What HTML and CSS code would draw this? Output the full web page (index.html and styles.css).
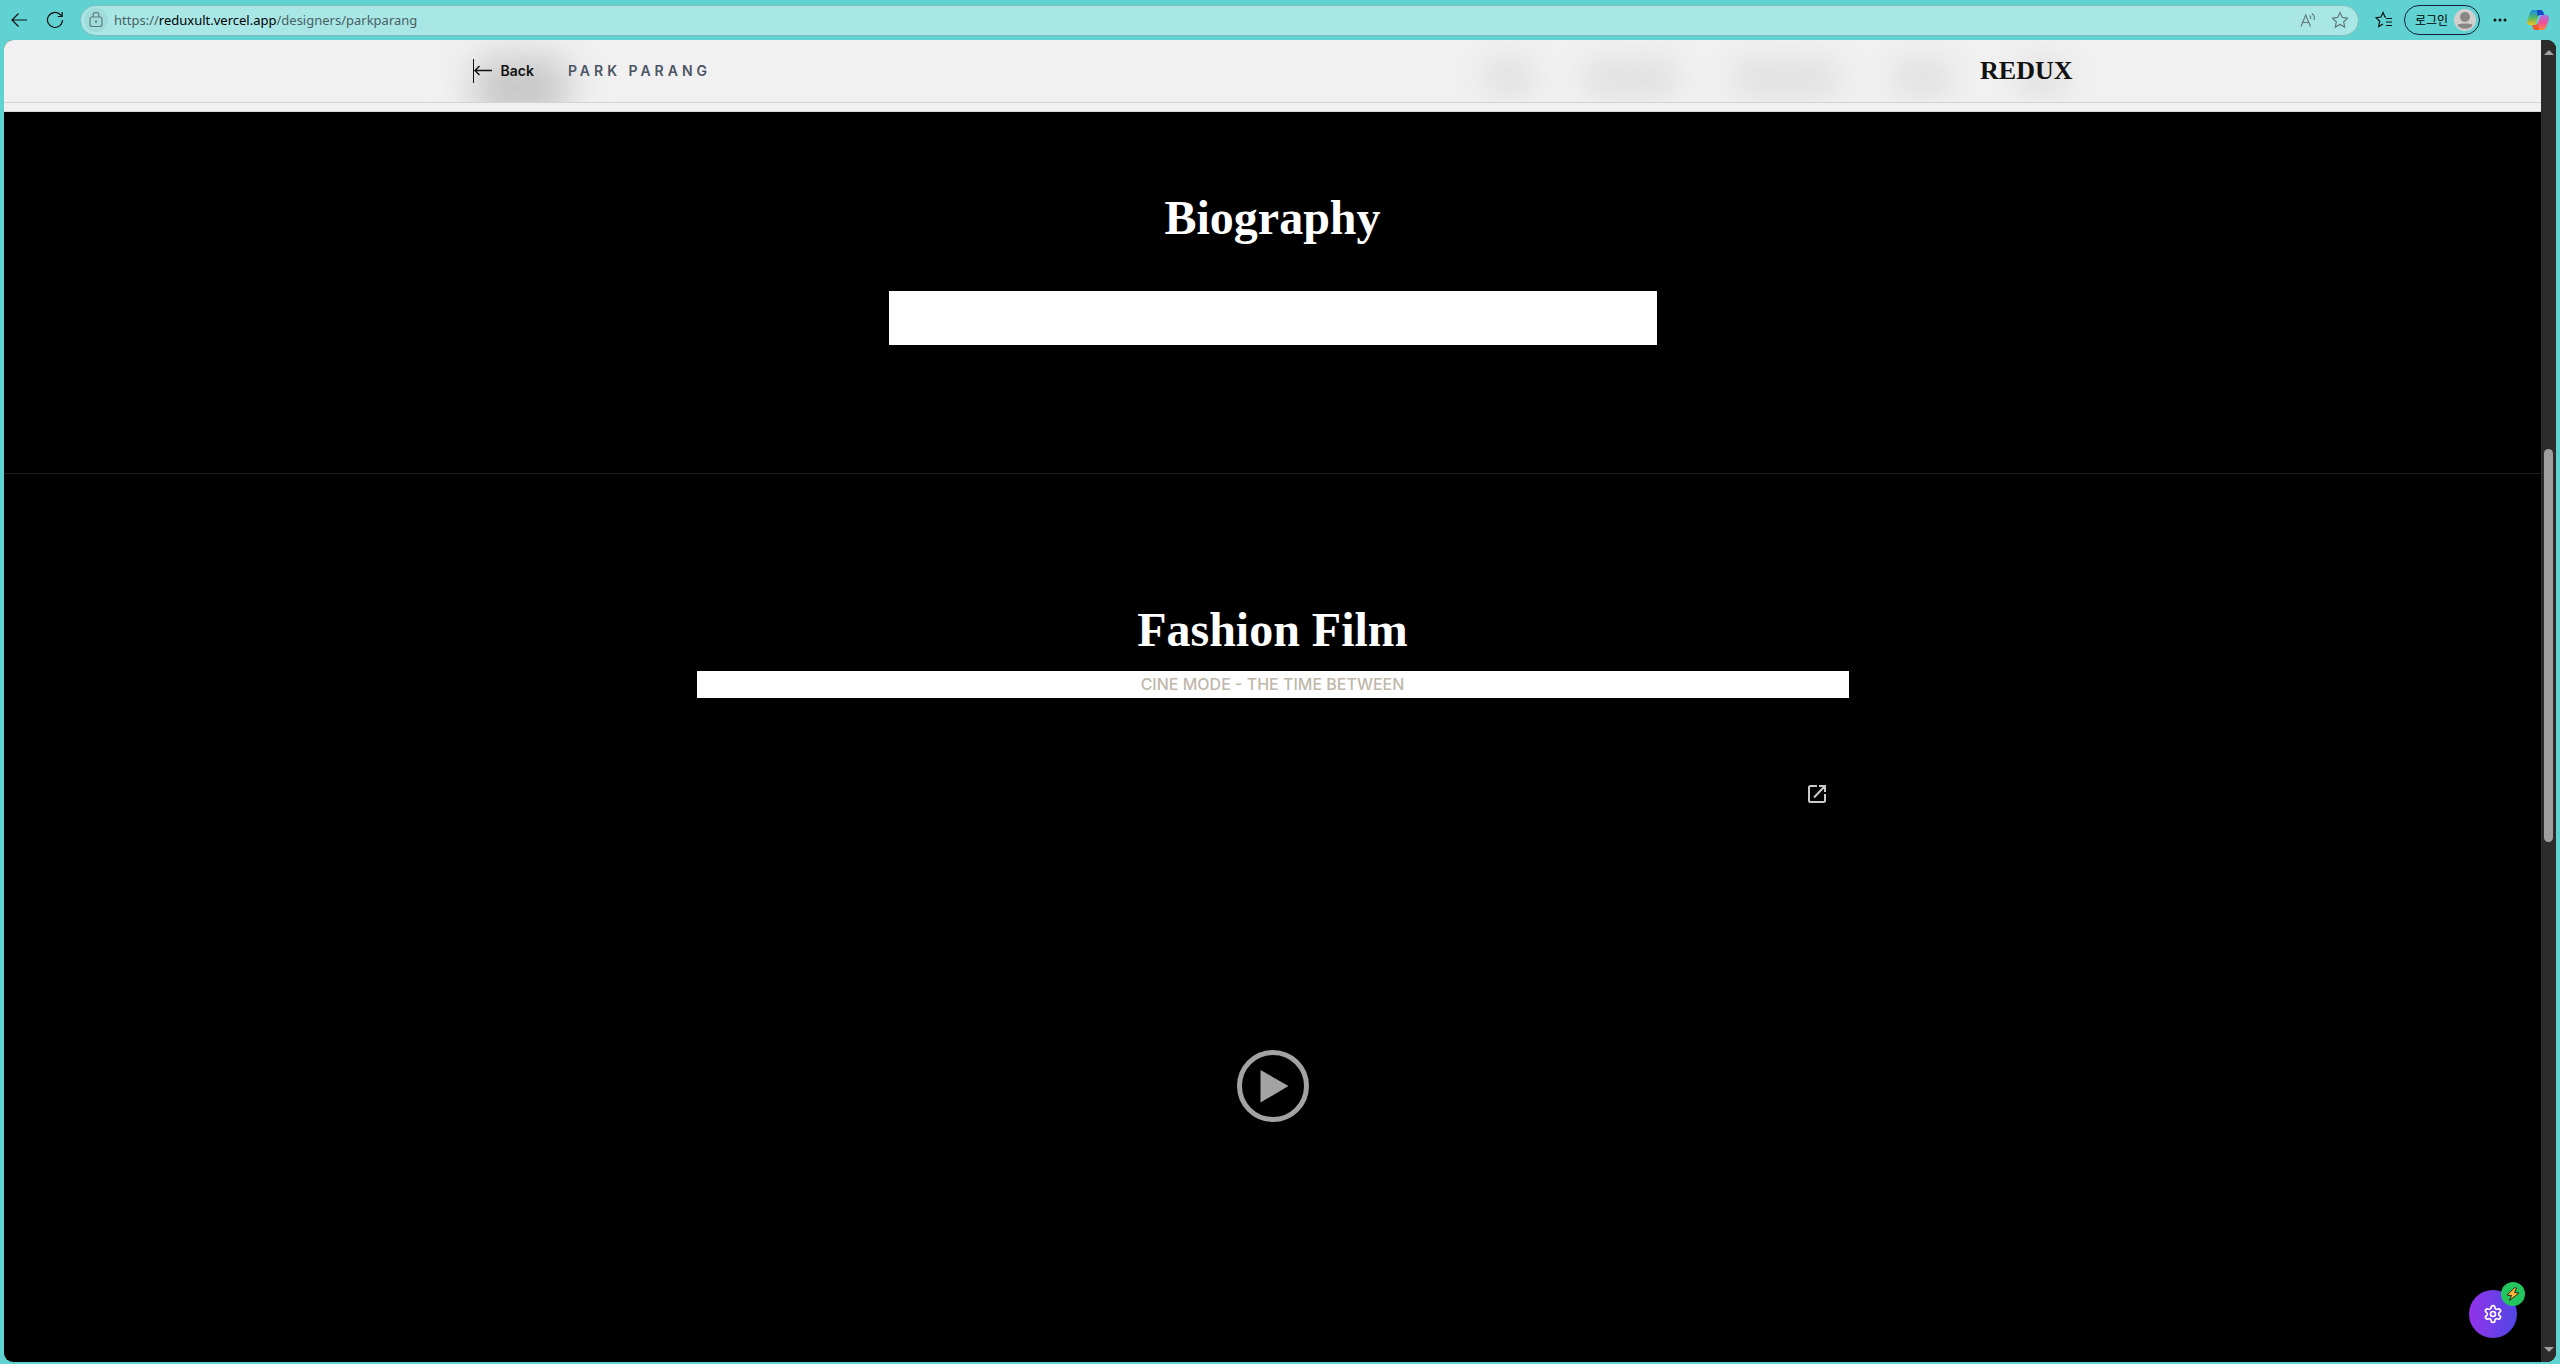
FILE: index.html
```html
<!DOCTYPE html>
<html lang="ko">
<head>
<meta charset="utf-8">
<title>Park Parang - REDUX</title>
<link rel="stylesheet" href="styles.css">
</head>
<body>
<div class="browser">
  <div class="toolbar">
    <button class="tool" aria-label="Back"><svg width="18" height="18" viewBox="0 0 18 18"><path d="M17 9H2M8.500 2.500 2 9l6.500 6.500"/></svg></button>
    <button class="tool reload" aria-label="Reload"><svg width="18" height="18" viewBox="0 0 18 18"><path d="M16.500 9a7.500 7.500 0 1 1-2.600-5.700L16 5.200M16.200 1v4.500h-4.500"/></svg></button>
    <div class="address">
      <button class="lock" aria-label="Site information"><svg width="14" height="16" viewBox="0 0 14 16"><rect x="1" y="5" width="12" height="9.500" rx="2"/><path d="M4 5V3.500a3 3 0 0 1 6 0V5"/><circle cx="7" cy="9.700" r=".6"/></svg></button>
      <div class="url" role="textbox" aria-label="Address">https://<b>reduxult.vercel.app</b>/designers/parkparang</div>
      <button class="mini" aria-label="Read aloud"><svg width="16" height="16" viewBox="0 0 16 16"><path d="M1 14.500 5.700 3l4.800 11.500M2.800 10.500h6M9.500 3.500c1 .8 1.400 2 1.200 3.500M11.800 1.500c2.200 1.300 3 4 2.200 6.500"/></svg></button>
      <button class="mini" aria-label="Add to favorites"><svg width="18" height="18" viewBox="0 0 18 18"><path d="m9 1.500 2.300 4.900 5.300.7-3.900 3.700 1 5.300L9 13.500l-4.700 2.600 1-5.300L1.400 7.100l5.300-.7z"/></svg></button>
    </div>
    <button class="tool" aria-label="Favorites"><svg width="18" height="18" viewBox="0 0 18 18"><path d="M11 6.200 10 6 8 1.500 6 6l-5 .7 3.700 3.500-1 5.300L8 13M11 7.500h6M11 11h6M11 14.500h6"/></svg></button>
    <button class="login">로그인<svg width="22" height="22" viewBox="0 0 22 22"><circle cx="11" cy="11" r="11" fill="#d2d0ce"/><circle cx="11" cy="8" r="5" fill="#8a8886"/><path d="M3.500 16c1-2 14-2 15 0-2 5-13 5-15 0z" fill="#8a8886"/></svg></button>
    <button class="tool more" aria-label="Settings and more"><svg width="14" height="4" viewBox="0 0 14 4"><circle cx="2" cy="2" r="1.500"/><circle cx="7" cy="2" r="1.500"/><circle cx="12" cy="2" r="1.500"/></svg></button>
    <button class="tool" aria-label="Copilot"><svg class="copilot" width="22" height="20" viewBox="0 0 22 20">
      <defs>
        <linearGradient id="c1" x1="0" y1="0" x2="0" y2="1"><stop offset="0" stop-color="#168fe5"/><stop offset=".5" stop-color="#4eb86b"/><stop offset="1" stop-color="#f5c21b"/></linearGradient>
        <linearGradient id="c2" x1="0" y1="0" x2="0" y2="1"><stop offset="0" stop-color="#a675e8"/><stop offset=".5" stop-color="#ed4f98"/><stop offset="1" stop-color="#ff8a3d"/></linearGradient>
      </defs>
      <path fill="url(#c1)" d="M6 0h7L9.500 12c-.7 2-1.500 3-3.500 3H3c-2.500 0-3.500-2-2.700-4.500L3 2.500C3.500 1 4.500 0 6 0z"/>
      <path fill="#1746c9" d="M10 0h4c2 0 2.500 3 3.500 5H13c-1.500 0-2 1-2.500 2z"/>
      <path fill="url(#c2)" d="M16 20H9l3.500-12c.7-2 1.500-3 3.500-3h3c2.500 0 3.500 2 2.700 4.500L19 17.500c-.5 1.500-1.500 2.500-3 2.500z"/>
      <path fill="#f2572d" d="M12 20H8c-2 0-2-3-3-5h3c1.500 0 2-1 2.500-2z"/>
    </svg></button>
  </div>
  <div class="window">
    <div class="page">
      <header class="nav">
        <div class="nav-blur">
          <i class="smudge dark"></i><i class="smudge s1"></i><i class="smudge s2"></i><i class="smudge s3"></i><i class="smudge s4"></i><i class="smudge s5"></i>
        </div>
        <div class="nav-inner">
          <a class="back" href="#"><svg width="20" height="24" viewBox="0 0 20 24"><path stroke-width="1" d="M.5 0v24"/><path stroke-width="1.500" d="M19 11.500H2M6.500 7 2 11.500 6.500 16"/></svg>Back</a>
          <span class="designer">PARK PARANG</span>
          <a class="brand" href="#">REDUX</a>
        </div>
      </header>
      <main>
        <section class="bio">
          <h2>Biography</h2>
          <div class="bio-text"></div>
        </section>
        <section class="film">
          <h2>Fashion Film</h2>
          <p class="film-title">CINE MODE - THE TIME BETWEEN</p>
          <div class="player">
            <a class="popout" href="#" aria-label="Open in new window"><svg width="18" height="18" viewBox="0 0 18 18"><path d="M9 1H2.500A1.500 1.500 0 0 0 1 2.500v13A1.500 1.500 0 0 0 2.500 17h13a1.500 1.500 0 0 0 1.500-1.500V9M11 1h6v6M17 1 6 12.500"/></svg></a>
            <button class="play" aria-label="Play"><svg width="72" height="72" viewBox="0 0 72 72"><circle cx="36" cy="36" r="33.500"/><path d="M23.500 20v32.500L51.500 36z"/></svg></button>
          </div>
        </section>
      </main>
      <button class="fab" aria-label="Settings">
        <svg width="20" height="20" viewBox="0 0 24 24"><path d="M12.220 2h-.44a2 2 0 0 0-2 2v.18a2 2 0 0 1-1 1.730l-.43.25a2 2 0 0 1-2 0l-.15-.08a2 2 0 0 0-2.730.73l-.22.38a2 2 0 0 0 .73 2.730l.15.1a2 2 0 0 1 1 1.720v.51a2 2 0 0 1-1 1.740l-.15.09a2 2 0 0 0-.73 2.730l.22.38a2 2 0 0 0 2.730.73l.15-.08a2 2 0 0 1 2 0l.43.25a2 2 0 0 1 1 1.730V20a2 2 0 0 0 2 2h.44a2 2 0 0 0 2-2v-.18a2 2 0 0 1 1-1.730l.43-.25a2 2 0 0 1 2 0l.15.08a2 2 0 0 0 2.730-.73l.22-.39a2 2 0 0 0-.73-2.730l-.15-.08a2 2 0 0 1-1-1.740v-.5a2 2 0 0 1 1-1.740l.15-.09a2 2 0 0 0 .73-2.730l-.22-.38a2 2 0 0 0-2.730-.73l-.15.08a2 2 0 0 1-2 0l-.43-.25a2 2 0 0 1-1-1.730V4a2 2 0 0 0-2-2z"/><circle cx="12" cy="12" r="3"/></svg>
        <span class="badge"><svg width="14" height="14" viewBox="0 0 14 14"><path d="M8.500.8 1 8l4.500.5-2 5L13 6 8.500 5.500 10.500 1z"/></svg></span>
      </button>
    </div>
    <div class="scrollbar"><span class="arrow up"></span><span class="thumb"></span><span class="arrow down"></span></div>
  </div>
</div>
</body>
</html>
```

FILE: styles.css
```css
* { box-sizing: border-box; }
body { margin: 0; background: #61d2d2; font-family: Inter, "Noto Sans CJK KR", sans-serif; }
button { padding: 0; border: 0; background: none; font: inherit; color: inherit; }
a { color: inherit; text-decoration: none; }
svg { display: block; flex: none; fill: none; }

.browser { display: flex; flex-direction: column; height: 100vh; padding: 0 4px 2px; }
.toolbar { display: flex; align-items: center; flex: none; height: 40px; padding: 0 7px 0 6px; }
.tool svg { stroke: #111; stroke-width: 1.2; }
.tool .copilot { stroke: none; }
.reload { margin: 0 16px 0 18px; }
.address { display: flex; align-items: center; flex: 1; height: 31px; margin-right: 16px; padding: 0 9px 0 3px; border: 1px solid #82bcbb; border-radius: 16px; background: #a8e7e6; }
.lock { display: grid; place-items: center; width: 24px; height: 24px; border-radius: 12px; background: #9fdcdb; }
.lock svg, .mini svg { stroke: #5f7776; stroke-width: 1.1; }
.url { flex: 1; padding-left: 6px; font: 13px/20px "Noto Sans", sans-serif; color: #496160; }
.url b { font-weight: 400; color: #000; }
.mini { margin-left: 15px; }
.login { display: flex; align-items: center; gap: 6px; height: 30px; margin-left: 11px; padding: 0 3px 0 10px; border: 1px solid #123; border-radius: 15px; font: 12px/20px "Noto Sans CJK KR", sans-serif; }
.more { margin: 0 20px 0 13px; }
.more svg { fill: #111; stroke: none; }

.window { display: flex; flex: 1; min-height: 0; overflow: hidden; border-radius: 9px; background: #000; }
.page { position: relative; flex: 1; min-width: 0; overflow: hidden; }
.nav { position: relative; height: 72px; border-bottom: 1px solid #d8d8d8; background: #f1f1f1; }
.nav-blur { position: absolute; inset: 0 0 8px; overflow: hidden; border-bottom: 1px solid #d3d3d3; }
.smudge { position: absolute; top: 18px; height: 40px; border-radius: 14px; background: #e1e1e1; filter: blur(14px); }
.dark { left: calc(50% - 798px); width: 92px; height: 60px; background: #c6c6c6; filter: blur(18px); }
.s1 { left: calc(50% + 211px); width: 50px; }
.s2 { left: calc(50% + 311px); width: 94px; }
.s3 { left: calc(50% + 460px); width: 106px; }
.s4 { left: calc(50% + 620px); width: 60px; }
.s5 { left: calc(50% + 745px); width: 50px; }
.nav-inner { position: relative; display: flex; align-items: center; max-width: 1600px; height: 61px; margin: 0 auto; }
.back { display: flex; align-items: center; gap: 8px; font-size: 14px; font-weight: 600; color: #111; }
.back svg { stroke: #111; }
.designer { margin-left: 34px; font-size: 14px; font-weight: 600; letter-spacing: 4px; color: #4b5563; }
.brand { margin-left: auto; font: 900 26px/28px "Liberation Serif", serif; color: #111; }

h2 { margin: 0; font: 700 48px/56px "Liberation Serif", serif; color: #fff; text-align: center; }
.bio { height: 362px; padding-top: 78px; border-bottom: 1px solid #1c1c1c; }
.bio-text { max-width: 768px; height: 54px; margin: 45px auto 0; background: #fff; }
.film { padding-top: 128px; }
.film-title { max-width: 1152px; margin: 13px auto 0; background: #fff; font-size: 16px; font-weight: 500; line-height: 27px; text-align: center; color: #c0b7aa; }
.player { position: relative; display: grid; place-items: center; max-width: 1152px; height: 648px; margin: 64px auto 0; border-radius: 8px; background: #010101; }
.popout { position: absolute; top: 23px; right: 23px; }
.popout svg { stroke: #ccc; stroke-width: 2; }
.play circle { stroke: #a3a3a3; stroke-width: 5; }
.play path { fill: #a3a3a3; }

.fab { position: absolute; right: 24px; bottom: 24px; display: grid; place-items: center; width: 48px; height: 48px; border-radius: 50%; background: linear-gradient(90deg, #9333ea, #4f46e5); }
.fab svg { stroke: #fff; stroke-width: 2; }
.badge { position: absolute; top: -8px; right: -8px; display: grid; place-items: center; width: 24px; height: 24px; border-radius: 50%; background: #22c55e; }
.fab .badge svg { fill: #fcb83a; stroke: #332511; stroke-width: 1; }

.scrollbar { display: flex; flex-direction: column; align-items: center; flex: none; width: 15px; padding: 10px 0; background: #2c2c2c; }
.arrow { border: 5px solid transparent; border-top-width: 0; border-bottom: 5px solid #a0a0a0; }
.down { margin-top: auto; transform: rotate(180deg); }
.thumb { flex: 0 0 393px; width: 9px; margin-top: 394px; border-radius: 5px; background: #9f9f9f; }
```
